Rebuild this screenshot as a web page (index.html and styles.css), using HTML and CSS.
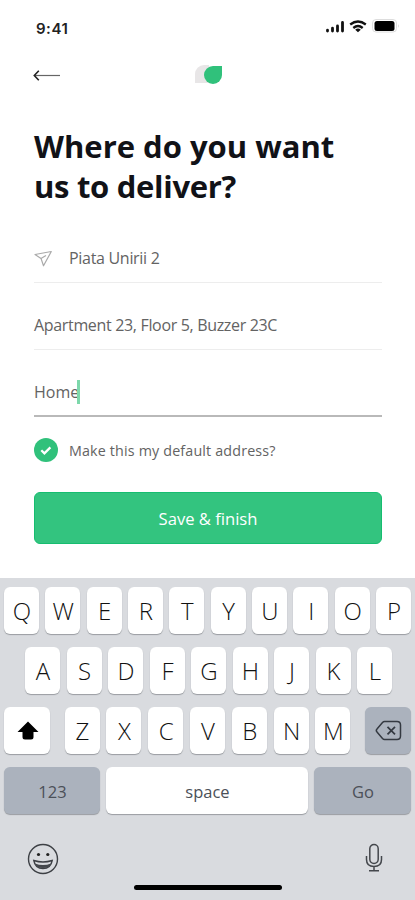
FILE: index.html
```html
<!DOCTYPE html>
<html lang="en">
<head>
<meta charset="utf-8">
<title>Delivery address</title>
<link rel="stylesheet" href="styles.css">
</head>
<body>
<main class="screen">
  <header class="status">
    <span class="time">9:41</span>
    <svg class="indicators" width="76" height="18" viewBox="0 0 76 18">
      <g stroke="#111" stroke-width="2.8" stroke-linecap="round"><path d="M2.500 13.200v.8M7.500 11.200v2.800M12.500 9v5M17.500 5.400v8.600"/></g>
      <g fill="none" stroke="#111" stroke-width="2.300"><path d="M25.200 7.500Q33 1.500 40.800 7.500"/><path d="M28.300 11Q33 7 37.700 11"/></g>
      <path d="M30.200 12.700Q33 10.500 35.800 12.700L33 15.300Z" fill="#111"/>
      <rect x="47.500" y="2.500" width="24" height="12.500" rx="3.500" fill="#fff" stroke="#ddd"/>
      <rect x="49.500" y="4" width="20" height="10" rx="2.500" fill="#000"/>
      <path d="M73.300 7v4q1.500-2 0-4" fill="#ccc"/>
    </svg>
  </header>
  <nav class="nav">
    <svg class="back" width="28" height="12" viewBox="0 0 28 12" fill="none"><path d="M2 6.500h25" stroke="#666" stroke-width="1.200"/><path d="M5.800 1.700 1.300 6.500l4.500 4.800" stroke="#222" stroke-width="1.600"/></svg>
    <svg class="logo" width="28" height="20" viewBox="0 0 28 20"><path d="M0 18V9A9 9 0 0 1 9 0h5v18z" fill="#e8e6e7"/><path d="M18 1h9v9a9 9 0 1 1-9-9z" fill="#30c17b"/></svg>
  </nav>
  <h1 class="title"><span class="t1">Where do you want</span><br><span class="t2">us to deliver?</span></h1>
  <form class="form">
    <div class="field">
      <svg class="plane" width="20" height="18" viewBox="0 0 20 18" fill="none" stroke="#aaa" stroke-width="1.200" stroke-linejoin="round"><path d="M1 5.500 17.300 2.500 9.500 16.800 7 9.400Z"/><path d="M7 9.400 12 6.500"/></svg>
      <span class="f1">Piata Unirii 2</span>
    </div>
    <div class="field"><span class="f2">Apartment 23, Floor 5, Buzzer 23C</span></div>
    <div class="field active"><span class="f3">Home</span><i class="caret"></i></div>
    <div class="check">
      <svg width="24" height="24" viewBox="0 0 24 24"><circle cx="12" cy="12" r="12" fill="#30c17b"/><path d="m7.300 12.300 3.100 3.100 6-6" fill="none" stroke="#fff" stroke-width="2.300"/></svg>
      <span class="f4">Make this my default address?</span>
    </div>
    <div class="save"><span>Save &amp; finish</span></div>
  </form>
  <section class="keyboard">
    <div class="row"><b>Q</b><b>W</b><b>E</b><b>R</b><b>T</b><b>Y</b><b>U</b><b>I</b><b>O</b><b>P</b></div>
    <div class="row second"><b>A</b><b>S</b><b>D</b><b>F</b><b>G</b><b>H</b><b>J</b><b>K</b><b>L</b></div>
    <div class="row third">
      <b class="wide"><svg width="22" height="20" viewBox="0 0 22 20"><path d="M11 .5 21.500 11H16.500v5q0 2.500-2.500 2.500H8q-2.500 0-2.500-2.500v-5H.5z"/></svg></b>
      <div class="row letters"><b>Z</b><b>X</b><b>C</b><b>V</b><b>B</b><b>N</b><b>M</b></div>
      <b class="wide gray"><svg width="28" height="22" viewBox="0 0 28 22" fill="none" stroke="#343941" stroke-width="1.500"><path d="M9.500 1.500H22q3.500 0 3.500 3.500v11q0 3.500-3.500 3.500H9.500q-1 0-2-1L2 12q-1.500-1.500 0-3l5.500-6.500q1-1 2-1z"/><path d="m12.500 6.800 7.500 7.500m0-7.500-7.500 7.500" stroke-width="1.700"/></svg></b>
    </div>
    <div class="row fourth"><b class="gray">123</b><b><span class="space">space</span></b><b class="gray">Go</b></div>
    <div class="tools">
      <svg width="32" height="32" viewBox="0 0 32 32" fill="none" stroke="#3d4045" stroke-width="1.400"><circle cx="16" cy="16" r="14.500"/><circle cx="11.500" cy="11.500" r="1.600" fill="#222" stroke="none"/><circle cx="20.800" cy="11.500" r="1.600" fill="#222" stroke="none"/><path d="M6.800 17.500q9.200 3 18.400 0-1.500 8-9.200 8t-9.200-8z"/><path d="M8 20.500q8 3 16 0-2 4.500-8 4.500t-8-4.500z" fill="#44474c" stroke="none"/></svg>
      <svg width="18" height="30" viewBox="0 0 18 30" fill="none" stroke="#44474c" stroke-width="1.500"><rect x="4.800" y="1.500" width="8.400" height="19" rx="4.200"/><path d="M1.500 13v3.500Q1.500 23.500 9 23.500t7.500-7V13M9 23.500v4M4 27.700h10"/></svg>
    </div>
    <div class="home"></div>
  </section>
</main>
</body>
</html>
```
FILE: styles.css
```css
* { box-sizing: border-box; }
body { margin: 0; background: #fff; font-family: "Open Sans", "Noto Sans", sans-serif; color: #636363; }
.screen { width: 415px; height: 900px; display: flex; flex-direction: column; overflow: hidden; }
.screen span { white-space: nowrap; }
svg { display: block; flex: none; }
.status { height: 57px; padding: 17px 14px 0 36px; display: flex; justify-content: space-between; }
.time { font: 600 15px/23px Inter, sans-serif; color: #222; letter-spacing: .5px; }
.nav { height: 69px; padding: 8px 34px 0 33px; display: flex; }
.back { margin-top: 4px; }
.logo { margin-left: 134px; }
.title { margin: 0; padding-left: 34px; height: 99px; font-size: 31px; line-height: 40px; font-weight: 700; color: #111217; }
.t2 { letter-spacing: -.3px; }
.form { margin: 0 33px 0 34px; height: 353px; font-size: 16px; }
.field { height: 58px; border-bottom: 1px solid #ededed; display: flex; align-items: center; margin-bottom: 9px; padding-top: 9px; }
.field span { line-height: 24px; }
.f1 { letter-spacing: -.3px; }
.f2 { letter-spacing: -.33px; }
.plane { margin-right: 15px; }
.field.active { border-bottom: 2px solid #b9b9b9; margin-bottom: 20px; }
.caret { width: 3px; height: 24px; background: #7dd8ab; margin-left: -2px; }
.check { display: flex; height: 26px; gap: 11px; align-items: center; font-size: 14.3px; }
.f4 { letter-spacing: .16px; }
.save { margin-top: 29px; height: 52px; border-radius: 6px; background: #33c47f; border: 1px solid #16bd70; color: #fff; font-size: 16.6px; display: flex; align-items: center; justify-content: center; }
.keyboard { background: #d9dbdf; height: 322px; padding: 9px 4px 0; display: flex; flex-direction: column; }
.row { display: grid; grid-template-columns: repeat(10, 35px); justify-content: space-between; height: 47px; margin-bottom: 13px; flex: none; }
.row b { height: 47px; border-radius: 6px; background: #fff; box-shadow: 0 1px 1px #999ca1; display: flex; align-items: center; justify-content: center; font-size: 24px; font-weight: 300; color: #111; padding-left: 1px; padding-bottom: 1px; }
.row b.wide { padding-bottom: 0; }
.row b.gray { background: #abb2bd; }
.second { grid-template-columns: repeat(9, 35px); margin-left: 21px; margin-right: 19px; }
.third { grid-template-columns: 46px 286px 46px; }
.letters { grid-template-columns: repeat(7, 35px); margin: 0; }
.fourth { grid-template-columns: 96px 202px 97px; }
.row.fourth b { font-size: 16.5px; font-weight: 400; color: #4b5058; padding-top: 2px; padding-bottom: 0; }
.tools { display: flex; justify-content: space-between; padding: 16px 32px 0 27px; margin: 0 -4px; height: 58px; }
.home { width: 148px; height: 5px; border-radius: 3px; background: #000; margin-left: 130px; }
```
